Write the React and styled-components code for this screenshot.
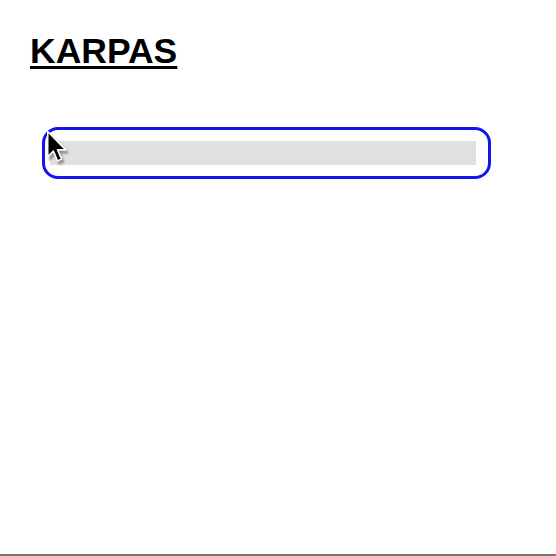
import styled, { createGlobalStyle } from "styled-components";

const GlobalStyle = createGlobalStyle`
  html, body {
    margin: 0;
    padding: 0;
    background: #fff;
  }
  body {
    font-family: "Liberation Sans", Arial, sans-serif;
  }
`;

const Page = styled.div`
  position: relative;
  width: 556px;
  height: 556px;
  box-sizing: border-box;
  border-bottom: 2px solid #777;
  padding: 32px 0 0 30px;
`;

const Title = styled.h1`
  margin: 0;
  font-size: 35.5px;
  font-weight: 700;
  line-height: 38px;
  text-decoration: underline;
  text-decoration-thickness: 3px;
  text-underline-offset: 3px;
  color: #000;
`;

const Frame = styled.div`
  margin: 57px 0 0 12px;
  width: 449px;
  height: 52px;
  box-sizing: border-box;
  border: 3px solid #1414ee;
  border-radius: 16px;
  display: flex;
  align-items: center;
  padding: 0 12px 0 5px;
`;

const Bar = styled.div`
  flex: 1;
  height: 24px;
  background: #e0e0e0;
`;

const Cursor = styled.svg`
  position: absolute;
  left: 46px;
  top: 130px;
  filter: drop-shadow(2px 3px 1px rgba(0, 0, 0, 0.35));
`;

export default function App() {
  return (
    <>
      <GlobalStyle />
      <Page>
        <Title>KARPAS</Title>
        <Frame>
          <Bar />
        </Frame>
        <Cursor width="23" height="35" viewBox="0 0 22 34">
          <path
            d="M1.5 1.5 L1.5 26 L7 20.5 L11 30 L15 28.3 L11 19.3 L19 19.3 Z"
            fill="#000"
            stroke="#fff"
            strokeWidth="1.5"
            strokeLinejoin="round"
          />
        </Cursor>
      </Page>
    </>
  );
}
